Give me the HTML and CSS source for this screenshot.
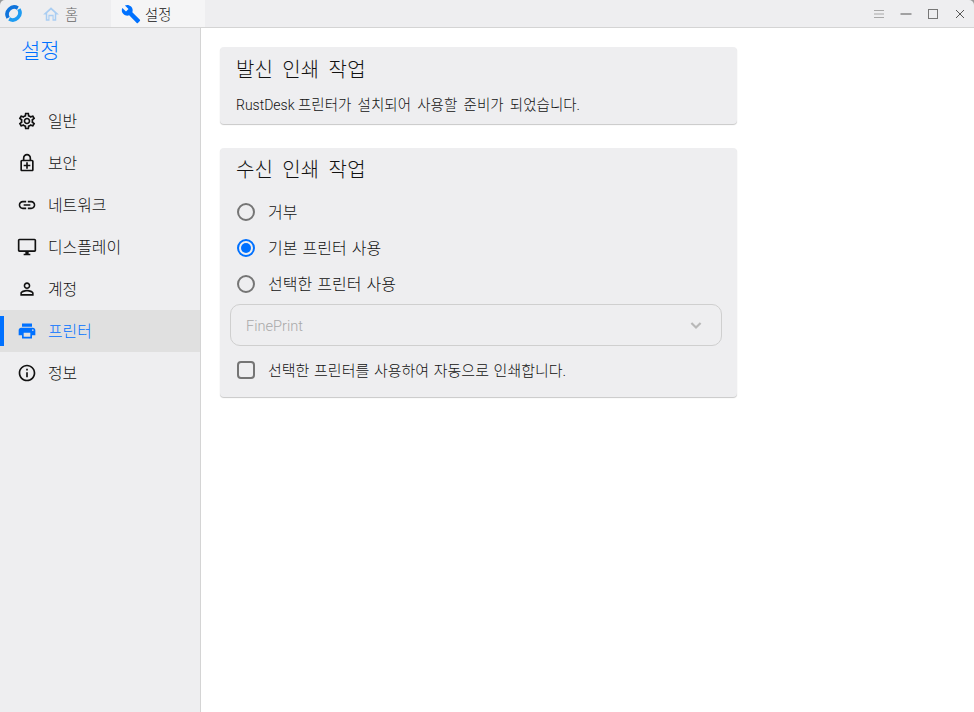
FILE: index.html
```html
<!DOCTYPE html>
<html lang="ko">
<head>
<meta charset="utf-8">
<title>설정</title>
<link rel="stylesheet" href="styles.css">
</head>
<body>
<div class="window">
  <header class="titlebar">
    <svg class="logo" viewBox="0 0 24 24" width="19" height="19"><path d="M17.500 5.200A9 9 0 0 0 5.200 17.500" fill="none" stroke="#0f74dc" stroke-width="4.600"/><path d="M6.500 18.800A9 9 0 0 0 18.800 6.500" fill="none" stroke="#1e9cf2" stroke-width="4.600"/></svg>
    <div class="tab tab-home">
      <svg class="tab-icon" viewBox="0 0 24 24" width="18" height="18"><path fill="#a9cdf2" d="M12 3 1.500 12.500H5V21h5v-6h4v6h5v-8.500h3.500zm5 16h-1.500v-6h-7v6H7v-8.300l5-4.500 5 4.500z"/></svg>
      <span>홈</span>
    </div>
    <div class="tab tab-active">
      <svg class="tab-icon" viewBox="0 0 24 24" width="20" height="20"><path fill="#0071ff" d="M22.7 19l-9.1-9.1c.9-2.3.4-5-1.5-6.9-2-2-5-2.4-7.4-1.3L9 6 6 9 1.6 4.7C.4 7.1.9 10.1 2.9 12.1c1.9 1.9 4.6 2.4 6.9 1.5l9.1 9.1c.4.4 1 .4 1.4 0l2.3-2.3c.5-.4.5-1.1.1-1.4z"/></svg>
      <span>설정</span>
    </div>
    <div class="controls">
      <svg viewBox="0 0 12 12" width="12" height="12"><path d="M1 2.5h10M1 6h10M1 9.500h10" stroke="#a8a8a8" stroke-width="1" fill="none"/></svg>
      <svg viewBox="0 0 12 12" width="12" height="12"><path d="M0.500 6h11" stroke="#555" stroke-width="1" fill="none"/></svg>
      <svg viewBox="0 0 12 12" width="12" height="12"><rect x="1.500" y="1.500" width="9" height="9" stroke="#777" stroke-width="1" fill="none"/></svg>
      <svg viewBox="0 0 12 12" width="12" height="12"><path d="M2 2l8 8M10 2l-8 8" stroke="#555" stroke-width="1" fill="none"/></svg>
    </div>
  </header>
  <div class="body">
    <aside class="sidebar">
      <h1 class="side-title">설정</h1>
      <nav class="nav">
        <div class="nav-item"><svg viewBox="0 0 24 24" width="20" height="20"><path d="M19.43 12.98c.04-.32.07-.64.07-.98 0-.34-.03-.66-.07-.98l2.11-1.65c.19-.15.24-.42.12-.64l-2-3.46c-.09-.16-.26-.25-.44-.25-.06 0-.12.01-.17.03l-2.49 1c-.52-.4-1.08-.73-1.69-.98l-.38-2.65C14.46 2.18 14.25 2 14 2h-4c-.25 0-.46.18-.49.42l-.38 2.65c-.61.25-1.17.59-1.69.98l-2.49-1c-.06-.02-.12-.03-.18-.03-.17 0-.34.09-.43.25l-2 3.46c-.13.22-.07.49.12.64l2.11 1.65c-.04.32-.07.65-.07.98 0 .33.03.66.07.98l-2.11 1.65c-.19.15-.24.42-.12.64l2 3.46c.09.16.26.25.44.25.06 0 .12-.01.17-.03l2.49-1c.52.4 1.08.73 1.69.98l.38 2.65c.03.24.24.42.49.42h4c.25 0 .46-.18.49-.42l.38-2.65c.61-.25 1.17-.59 1.69-.98l2.49 1c.06.02.12.03.18.03.17 0 .34-.09.43-.25l2-3.46c.12-.22.07-.49-.12-.64l-2.11-1.65zm-1.98-1.71c.04.31.05.52.05.73 0 .21-.02.43-.05.73l-.14 1.13.89.7 1.08.84-.7 1.21-1.27-.51-1.04-.42-.9.68c-.43.32-.84.56-1.25.73l-1.06.43-.16 1.13-.2 1.35h-1.4l-.19-1.35-.16-1.13-1.06-.43c-.43-.18-.83-.41-1.23-.71l-.91-.7-1.06.43-1.27.51-.7-1.21 1.08-.84.89-.7-.14-1.13c-.03-.31-.05-.54-.05-.74s.02-.43.05-.73l.14-1.13-.89-.7-1.08-.84.7-1.21 1.27.51 1.04.42.9-.68c.43-.32.84-.56 1.25-.73l1.06-.43.16-1.13.2-1.35h1.39l.19 1.35.16 1.13 1.06.43c.43.18.83.41 1.23.71l.91.7 1.06-.43 1.27-.51.7 1.21-1.07.85-.89.7.14 1.13zM12 8c-2.21 0-4 1.79-4 4s1.79 4 4 4 4-1.79 4-4-1.79-4-4-4zm0 6c-1.1 0-2-.9-2-2s.9-2 2-2 2 .9 2 2-.9 2-2 2z"/></svg><span>일반</span></div>
        <div class="nav-item"><svg viewBox="0 0 24 24" width="20" height="20"><path d="M18 8h-1V6c0-2.76-2.24-5-5-5S7 3.24 7 6v2H6c-1.1 0-2 .9-2 2v10c0 1.1.9 2 2 2h12c1.1 0 2-.9 2-2V10c0-1.1-.9-2-2-2zM9 6c0-1.66 1.34-3 3-3s3 1.34 3 3v2H9V6zm9 14H6V10h12v10zm-7-1h2v-3h3v-2h-3v-3h-2v3H8v2h3z"/></svg><span>보안</span></div>
        <div class="nav-item"><svg viewBox="0 0 24 24" width="20" height="20"><path d="M3.9 12c0-1.71 1.39-3.1 3.1-3.1h4V7H7c-2.76 0-5 2.24-5 5s2.24 5 5 5h4v-1.9H7c-1.71 0-3.1-1.39-3.1-3.1zM8 13h8v-2H8v2zm9-6h-4v1.9h4c1.71 0 3.1 1.39 3.1 3.1s-1.39 3.1-3.1 3.1h-4V17h4c2.76 0 5-2.24 5-5s-2.24-5-5-5z"/></svg><span>네트워크</span></div>
        <div class="nav-item"><svg viewBox="0 0 24 24" width="20" height="20"><path d="M21 2H3c-1.1 0-2 .9-2 2v12c0 1.1.9 2 2 2h7v2H8v2h8v-2h-2v-2h7c1.1 0 2-.9 2-2V4c0-1.1-.9-2-2-2zm0 14H3V4h18v12z"/></svg><span>디스플레이</span></div>
        <div class="nav-item"><svg viewBox="0 0 24 24" width="20" height="20"><path d="M12 5.900c1.160 0 2.100.94 2.100 2.100s-.94 2.100-2.100 2.100S9.900 9.160 9.900 8s.94-2.100 2.100-2.100m0 9c2.970 0 6.100 1.460 6.100 2.100v1.100H5.900V17c0-.64 3.130-2.100 6.100-2.100M12 4C9.790 4 8 5.790 8 8s1.790 4 4 4 4-1.790 4-4-1.790-4-4-4zm0 9c-2.670 0-8 1.340-8 4v3h16v-3c0-2.660-5.330-4-8-4z"/></svg><span>계정</span></div>
        <div class="nav-item nav-active"><svg viewBox="0 0 24 24" width="20" height="20"><path d="M19 8H5c-1.660 0-3 1.340-3 3v6h4v4h12v-4h4v-6c0-1.660-1.340-3-3-3zm-3 11H8v-5h8v5zm3-7c-.55 0-1-.45-1-1s.45-1 1-1 1 .45 1 1-.45 1-1 1zm-1-9H6v4h12V3z"/></svg><span>프린터</span></div>
        <div class="nav-item"><svg viewBox="0 0 24 24" width="20" height="20"><path d="M11 7h2v2h-2zm0 4h2v6h-2zm1-9C6.480 2 2 6.480 2 12s4.480 10 10 10 10-4.480 10-10S17.520 2 12 2zm0 18c-4.410 0-8-3.590-8-8s3.590-8 8-8 8 3.590 8 8-3.590 8-8 8z"/></svg><span>정보</span></div>
      </nav>
    </aside>
    <main class="content">
      <section class="card card-send">
        <h2 class="card-title">발신 인쇄 작업</h2>
        <p class="card-text"><span class="latin">RustDesk </span>프린터가 설치되어 사용할 준비가 되었습니다.</p>
      </section>
      <section class="card card-recv">
        <h2 class="card-title">수신 인쇄 작업</h2>
        <div class="options">
          <div class="option"><span class="radio"></span><span class="option-label">거부</span></div>
          <div class="option"><span class="radio radio-on"></span><span class="option-label">기본 프린터 사용</span></div>
          <div class="option"><span class="radio"></span><span class="option-label">선택한 프린터 사용</span></div>
        </div>
        <div class="select">
          <span class="select-value">FinePrint</span>
          <svg viewBox="0 0 24 24" width="20" height="20"><path fill="none" stroke="#b8b8b8" stroke-width="2.600" d="M6.500 9.500 12 15l5.500-5.500"/></svg>
        </div>
        <div class="option option-small"><span class="check"></span><span class="option-label">선택한 프린터를 사용하여 자동으로 인쇄합니다.</span></div>
      </section>
    </main>
  </div>
</div>
</body>
</html>
```
FILE: styles.css
```css
* { box-sizing: border-box; }
html, body { margin: 0; height: 100%; background: #fff; }
body { font-family: Roboto, "Noto Sans CJK KR", sans-serif; color: #1e1e1e; overflow: hidden; }
.window { width: 974px; height: 712px; display: flex; flex-direction: column; background: #9a9a9a; }
.titlebar { height: 28px; flex: none; display: flex; align-items: stretch; background: #eeeef0; border-bottom: 1px solid #d4d4d4; border-radius: 5px 5px 0 0; }
.logo { align-self: center; margin: 0 0 0 4px; flex: none; }
.tab { display: flex; align-items: center; font-size: 14.300px; font-weight: 300; }
.tab-home { width: 88px; padding-left: 19px; gap: 5px; color: #666; }
.tab-active { width: 94px; padding-left: 10px; gap: 4px; background: #f5f5f6; color: #111; }
.controls { margin-left: auto; display: flex; align-items: center; gap: 15px; padding-right: 8px; }
.body { flex: 1; display: flex; min-height: 0; background: #fff; }
.sidebar { width: 201px; flex: none; background: #eeeef0; border-right: 1px solid #d4d4d4; }
.side-title { margin: 0; height: 72px; padding: 8px 0 0 21px; font-size: 21px; line-height: 30px; font-weight: 300; color: #0071ff; }
.nav-item { position: relative; height: 42px; padding: 0 0 2px 17px; display: flex; align-items: center; gap: 11px; font-size: 15.900px; font-weight: 300; color: #111; }
.nav-item svg { fill: #111; flex: none; margin-top: 2px; }
.nav-active { background: #e0e0e0; color: #0071ff; }
.nav-active svg { fill: #0071ff; }
.nav-active::before { content: ""; position: absolute; left: 0; top: 6px; bottom: 6px; width: 4px; background: #0071ff; }
.content { flex: 1; padding: 19px 0 0 19px; }
.card { width: 517px; background: #eeeef0; border-radius: 4px; box-shadow: 0 1px 1px rgba(0,0,0,.22); padding: 0 16px 0 15px; margin-bottom: 24px; }
.card-send { height: 77px; }
.card-send .card-title { padding-top: 8px; }
.card-recv { height: 249px; }
.card-title { margin: 0; padding: 7px 0 0 1px; font-size: 20px; line-height: 30px; font-weight: 300; word-spacing: 4px; letter-spacing: .2px; color: #111; }
.card-text { margin: 10px 0 0 1px; font-size: 14.500px; line-height: 20px; word-spacing: 2.750px; font-weight: 300; color: #111; }
.latin { font-size: 14px; word-spacing: 0; }
.options { margin-top: 9px; }
.option { height: 36px; display: flex; align-items: center; gap: 13px; font-size: 16px; font-weight: 300; color: #111; }
.option-small { font-size: 15px; }
.option-label { word-spacing: 1.200px; line-height: 20px; padding-top: 2px; }
.option-small .option-label { word-spacing: 1px; }
.radio { width: 18px; height: 18px; border-radius: 50%; border: 2px solid #757575; margin-left: 2px; flex: none; }
.radio-on { border-color: #0071ff; position: relative; }
.radio-on::after { content: ""; position: absolute; inset: 2px; border-radius: 50%; background: #0071ff; }
.check { width: 18px; height: 18px; border-radius: 4px; border: 2px solid #757575; margin-left: 2px; flex: none; }
.select { height: 42px; width: 492px; margin: 2px 0 6px -5px; border: 1px solid #cfcfcf; border-radius: 10px; display: flex; align-items: center; justify-content: space-between; padding: 0 15px 0 15px; font-size: 14.600px; font-weight: 300; color: #a9a9a9; }
.select-value { padding-top: 2px; }
```
